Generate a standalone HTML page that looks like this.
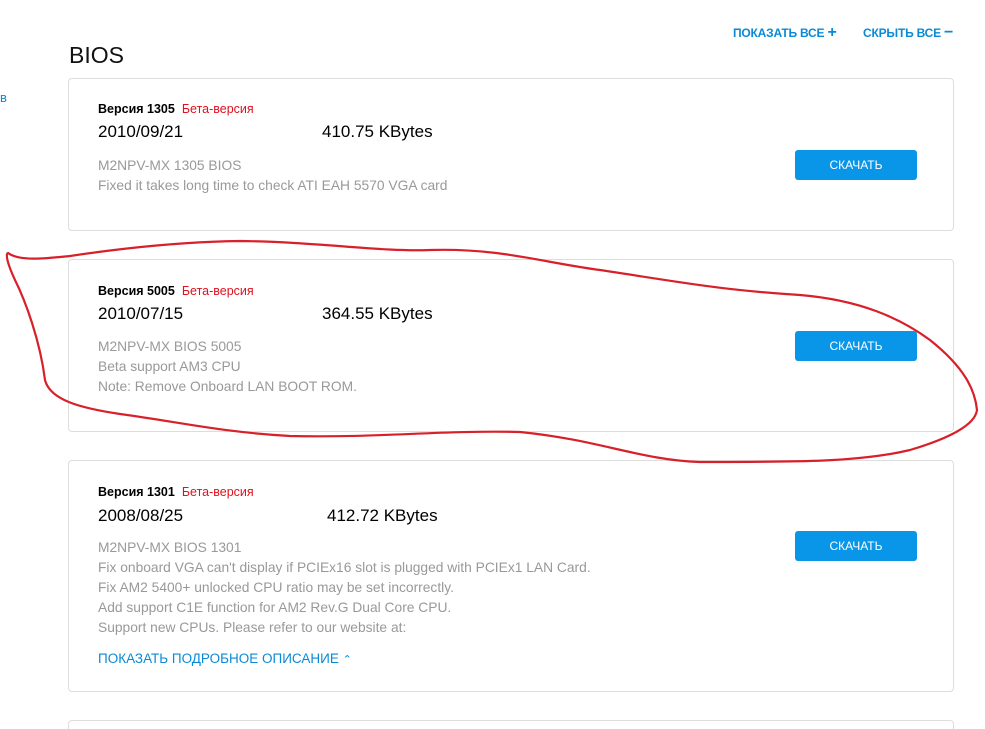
<!DOCTYPE html>
<html><head><meta charset="utf-8"><style>
*{margin:0;padding:0;box-sizing:border-box}
html,body{width:985px;height:729px;overflow:hidden}
body{background:#fff;font-family:"Liberation Sans","DejaVu Sans",sans-serif;position:relative;color:#000}
.top{position:absolute;top:24px;font-size:12px;font-weight:bold;color:#0a8ad6;letter-spacing:-0.2px}
h1{position:absolute;left:69px;top:42px;font-size:23px;font-weight:normal;color:#111}
.card{position:absolute;left:68px;width:886px;border:1px solid #ddd;border-radius:4px;background:#fff}
.v{position:absolute;left:29px;font-size:12.5px;font-weight:bold}
.v span{color:#e0101e;font-weight:normal;margin-left:7px}
.d{position:absolute;left:29px;font-size:17px}
.s{position:absolute;font-size:17px}
.desc{position:absolute;left:29px;font-size:13.8px;color:#999;line-height:20px}
.btn{position:absolute;left:726px;width:122px;height:30px;background:#0a96e8;border-radius:3px;color:#fff;font-size:12px;text-align:center;line-height:30px}
.more{position:absolute;left:29px;font-size:13.5px;color:#0a8ad6}
</style></head><body>
<div class="top" style="left:733px">ПОКАЗАТЬ ВСЕ <span style="font-size:16px">+</span></div>
<div class="top" style="left:863px">СКРЫТЬ ВСЕ <span style="font-size:16px">−</span></div>
<div style="position:absolute;left:0;top:90px;font-size:13px;color:#0a8ad6">в</div>
<h1>BIOS</h1>
<div class="card" style="top:78px;height:153px">
<div class="v" style="top:23px">Версия 1305<span>Бета-версия</span></div>
<div class="d" style="top:43px">2010/09/21</div><div class="s" style="left:253px;top:43px">410.75 KBytes</div>
<div class="desc" style="top:77px">M2NPV-MX 1305 BIOS<br>Fixed it takes long time to check ATI EAH 5570 VGA card</div>
<div class="btn" style="top:71px">СКАЧАТЬ</div></div>
<div class="card" style="top:259px;height:173px">
<div class="v" style="top:24px">Версия 5005<span>Бета-версия</span></div>
<div class="d" style="top:44px">2010/07/15</div><div class="s" style="left:253px;top:44px">364.55 KBytes</div>
<div class="desc" style="top:77px">M2NPV-MX BIOS 5005<br>Beta support AM3 CPU<br>Note: Remove Onboard LAN BOOT ROM.</div>
<div class="btn" style="top:71px">СКАЧАТЬ</div></div>
<div class="card" style="top:460px;height:232px">
<div class="v" style="top:24px">Версия 1301<span>Бета-версия</span></div>
<div class="d" style="top:45px">2008/08/25</div><div class="s" style="left:258px;top:45px">412.72 KBytes</div>
<div class="desc" style="top:77px">M2NPV-MX BIOS 1301<br>Fix onboard VGA can't display if PCIEx16 slot is plugged with PCIEx1 LAN Card.<br>Fix AM2 5400+ unlocked CPU ratio may be set incorrectly.<br>Add support C1E function for AM2 Rev.G Dual Core CPU.<br>Support new CPUs. Please refer to our website at:</div>
<div class="more" style="top:190px">ПОКАЗАТЬ ПОДРОБНОЕ ОПИСАНИЕ <span style="font-size:11px">⌃</span></div>
<div class="btn" style="top:70px">СКАЧАТЬ</div></div>
<div class="card" style="top:720px;height:40px"></div>
<svg width="985" height="729" style="position:absolute;left:0;top:0" fill="none" stroke="#d8202a" stroke-width="2.2">
<path d="M8,253 C20,262 50,258 70,256 C110,250 170,242 240,241 C320,242 380,252 430,250 C500,248 540,262 600,270 C680,282 720,290 800,295 C860,300 900,318 930,340 C965,368 975,390 977,410 C975,425 950,438 910,450 C860,462 800,462 700,462 C640,460 600,440 520,432 C440,430 380,438 290,436 C220,432 180,422 120,414 C80,408 50,400 45,380 C40,340 25,300 15,280 C8,265 5,254 8,253 Z"/>
</svg>
</body></html>
